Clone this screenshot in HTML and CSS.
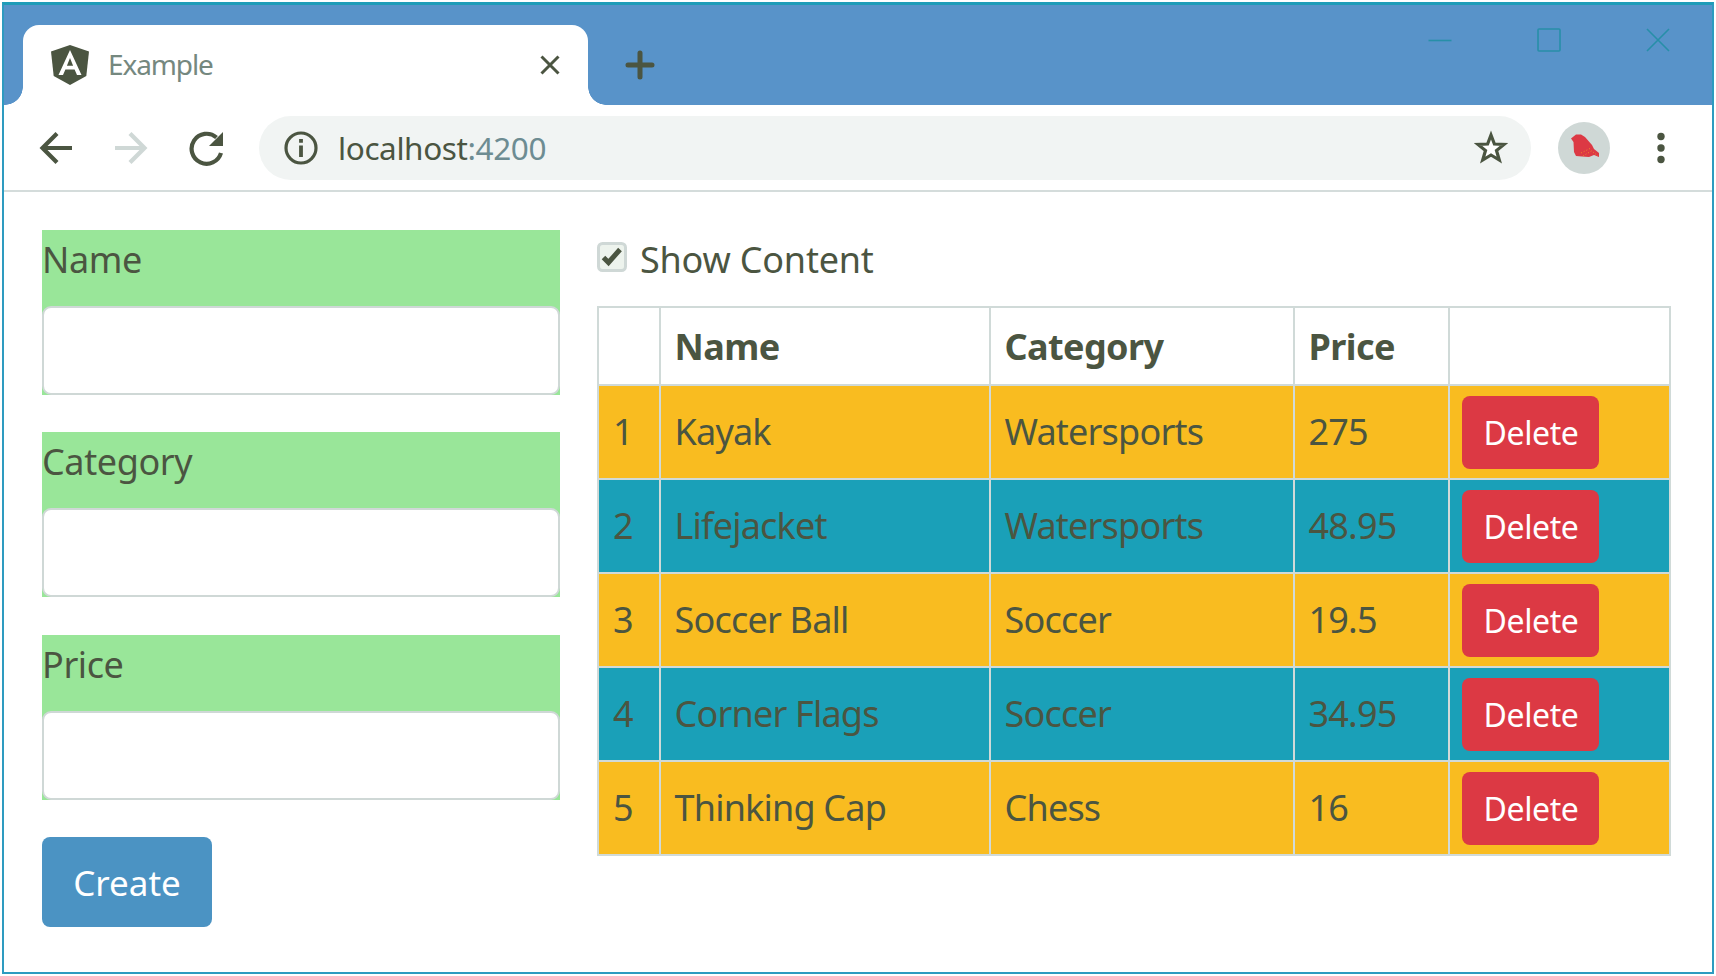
FILE: index.html
```html
<!DOCTYPE html>
<html lang="en">
<head>
<meta charset="utf-8">
<title>Example</title>
<link rel="stylesheet" href="styles.css">
</head>
<body>
<div class="window">
  <header class="tabbar">
    <div class="tab">
      <svg class="shield" viewBox="0 0 40 40"><path fill="#4b5541" d="M20 0 39 6.5 36.3 31 20 40 3.700 31 1 6.500Z"/><path fill="#fff" fill-rule="evenodd" d="M20 5 31.500 30H27L24.600 24.500H15.400L13 30H8.500ZM20 13 16.900 20.800H23.100Z"/></svg>
      <span class="tab-title">Example</span>
      <svg class="tab-close" viewBox="0 0 22 22"><path d="M2.500 2.500 19.500 19.500M19.500 2.500 2.500 19.500" stroke="#4b5541" stroke-width="3"/></svg>
    </div>
    <svg class="plus" viewBox="0 0 30 30"><path d="M15 3V27M3 15H27" stroke="#4b5541" stroke-width="5" stroke-linecap="round"/></svg>
    <div class="controls">
      <svg viewBox="0 0 24 24"><path d="M.5 12.500H23.500"/></svg>
      <svg viewBox="0 0 24 24"><rect x="1" y="1" width="22" height="22" rx="1"/></svg>
      <svg viewBox="0 0 24 24"><path d="M1 1 23 23M23 1 1 23"/></svg>
    </div>
  </header>
  <div class="toolbar">
    <svg class="nav" viewBox="0 0 36 36"><path d="M34 18H5M19 3.500 4.500 18 19 32.500" fill="none" stroke="#4b5541" stroke-width="4.200"/></svg>
    <svg class="nav fwd" viewBox="0 0 36 36"><path d="M2 18H31M17 3.500 31.500 18 17 32.500" fill="none" stroke="#cfd8d6" stroke-width="4.200"/></svg>
    <svg class="nav reload" viewBox="0 0 36 36"><path d="M33 23A15 15 0 1 1 28.500 7.500" fill="none" stroke="#4b5541" stroke-width="4.200"/><path d="M35 2V16H21Z" fill="#4b5541"/></svg>
    <div class="address">
      <svg class="info" viewBox="0 0 34 34"><circle cx="17" cy="17" r="15" fill="none" stroke="#4b5541" stroke-width="3.200"/><path d="M17 14.500V26M17 8V11.800" stroke="#4b5541" stroke-width="3.800"/></svg>
      <span class="url">localhost<span class="port">:4200</span></span>
      <svg class="star" viewBox="0 0 36 36"><path d="M18 5 21.400 14 31 14.500 23.500 20.500 26.300 30 18 25 9.700 30 12.500 20.500 5 14.500 14.600 14Z" fill="#fff" stroke="#4b5541" stroke-width="3.200"/></svg>
    </div>
    <svg class="avatar" viewBox="0 0 52 52"><circle cx="26" cy="26" r="26" fill="#cfd8d6"/><path fill="#dc3944" d="M13 16.500 18 12.500H23L27 15 34 23 36 27 41 31V35L36 33 31 35 24 34.500 18 34 16 30 15.500 20Z"/><path d="M23 31 33 26M25 34 35 28M35 30 40 34" stroke="#f08a2a" stroke-width="1" stroke-dasharray="1 2"/></svg>
    <svg class="dots" viewBox="0 0 8 32"><g fill="#4b5541"><circle cx="4" cy="4.500" r="3.700"/><circle cx="4" cy="16" r="3.700"/><circle cx="4" cy="27.500" r="3.700"/></g></svg>
  </div>
  <main class="content">
    <form class="form">
      <div class="group"><label>Name</label><input type="text"></div>
      <div class="group"><label>Category</label><input type="text"></div>
      <div class="group"><label>Price</label><input type="text"></div>
      <button class="create" type="button">Create</button>
    </form>
    <section class="list">
      <div class="toggle">
        <svg class="check" viewBox="0 0 30 30"><rect x="1.500" y="1.500" width="27" height="27" rx="4" fill="#edf3ed" stroke="#cfd8d6" stroke-width="3"/><path d="M6.500 15.500 11.500 20.500 23 7.500" fill="none" stroke="#4b5541" stroke-width="5"/></svg>
        <span>Show Content</span>
      </div>
      <table class="products">
        <colgroup><col class="c1"><col class="c2"><col class="c3"><col class="c4"><col class="c5"></colgroup>
        <thead><tr><th></th><th>Name</th><th>Category</th><th>Price</th><th></th></tr></thead>
        <tbody>
          <tr><td>1</td><td>Kayak</td><td>Watersports</td><td>275</td><td><button type="button">Delete</button></td></tr>
          <tr><td>2</td><td>Lifejacket</td><td>Watersports</td><td>48.95</td><td><button type="button">Delete</button></td></tr>
          <tr><td>3</td><td>Soccer Ball</td><td>Soccer</td><td>19.5</td><td><button type="button">Delete</button></td></tr>
          <tr><td>4</td><td>Corner Flags</td><td>Soccer</td><td>34.95</td><td><button type="button">Delete</button></td></tr>
          <tr><td>5</td><td>Thinking Cap</td><td>Chess</td><td>16</td><td><button type="button">Delete</button></td></tr>
        </tbody>
      </table>
    </section>
  </main>
</div>
</body>
</html>
```
FILE: styles.css
```css
* { box-sizing: border-box; }
body { margin: 0; padding: 2px; width: 1716px; height: 976px; background: #fff; color: #4b5541; font-family: "Noto Sans", "Open Sans", sans-serif; font-size: 36px; overflow: hidden; }
svg { display: block; flex: none; }
.window { width: 1712px; height: 972px; border: 2px solid #2e9bc0; border-top: 3px solid #1f9cb8; background: #fff; }
.tabbar { height: 100px; background: #5893c9; display: flex; align-items: flex-start; padding: 20px 0 0 19px; }
.tab { position: relative; width: 565px; height: 80px; background: #fff; border-radius: 16px 16px 0 0; display: flex; align-items: center; padding: 0 27px 0 27px; }
.tab::before, .tab::after { content: ""; position: absolute; bottom: 0; width: 18px; height: 18px; }
.tab::before { left: -18px; background: radial-gradient(circle at 0 0, #5893c9 17.500px, #fff 18px); }
.tab::after { right: -18px; background: radial-gradient(circle at 100% 0, #5893c9 17.500px, #fff 18px); }
.shield { width: 40px; height: 40px; }
.tab-title { margin: -2px 0 0 18px; font-size: 28px; line-height: 40px; letter-spacing: -1.100px; color: #75887f; flex: 1; }
.tab-close { width: 22px; height: 22px; }
.plus { width: 30px; height: 30px; margin: 25px 0 0 37px; }
.controls { margin: 3px 42px 0 auto; display: flex; gap: 85px; }
.controls svg { width: 24px; height: 24px; fill: none; stroke: #278fa8; stroke-width: 1.600; }
.toolbar { height: 87px; border-bottom: 2px solid #d4dcdb; display: flex; align-items: center; padding: 0 47px 0 34px; }
.nav { width: 36px; height: 36px; }
.fwd { margin-left: 39px; }
.reload { margin-left: 39px; }
.address { margin-left: 35px; width: 1272px; height: 64px; border-radius: 33px; background: #f1f4f3; display: flex; align-items: center; padding: 0 22px 0 25px; }
.info { width: 34px; height: 34px; }
.url { margin-left: 20px; font-size: 31.500px; letter-spacing: -0.400px; flex: 1; }
.port { color: #6d8c92; }
.star { width: 36px; height: 36px; }
.avatar { width: 52px; height: 52px; margin-left: 27px; }
.dots { width: 8px; height: 32px; margin-left: auto; }
.content { display: flex; padding: 38px 39px 0 38px; }
.form { width: 518px; }
.group { height: 165px; margin-bottom: 37.400px; background: #99e699; }
.group label { display: block; height: 76px; padding-left: 0; line-height: 60px; letter-spacing: -0.400px; }
.group input { display: block; width: 100%; height: 89px; border: 2px solid #cfd8d6; border-radius: 9px; background: #fff; }
button { font-family: inherit; border: 0; color: #fff; }
.create { display: block; width: 170px; height: 90px; border-radius: 8px; background: #4b93c3; font-size: 35px; line-height: 48px; padding: 2px 0 0; }
.list { margin-left: 38px; width: 1073px; }
.toggle { display: flex; height: 76px; line-height: 60px; letter-spacing: -0.200px; }
.check { width: 30px; height: 30px; margin: 12px 13px 0 -1px; }
.products { margin-left: -1px; width: 1073px; table-layout: fixed; border-collapse: collapse; }
.c1 { width: 61.500px; } .c2 { width: 330px; } .c3 { width: 304px; } .c4 { width: 155.500px; } .c5 { width: 221px; }
th, td { border: 2px solid #d0dad8; padding: 0 0 0 14px; text-align: left; height: 94px; line-height: 48px; white-space: nowrap; letter-spacing: -0.800px; }
th { height: 78px; letter-spacing: -0.600px; padding-top: 2px; }
tbody tr:nth-child(odd) { background: #f9bc20; }
tbody tr:nth-child(even) { background: #1aa0b8; }
td:last-child { padding-left: 12px; }
td button { display: block; width: 137px; height: 73px; border-radius: 8px; background: #dc3944; font-size: 32px; letter-spacing: -0.400px; padding: 1px 0 0 1px; }
```
